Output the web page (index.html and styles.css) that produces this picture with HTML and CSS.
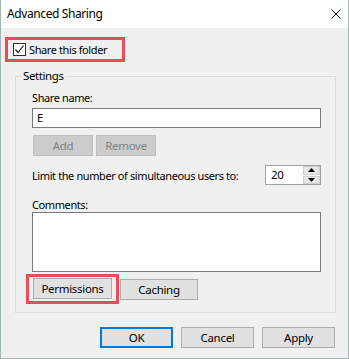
FILE: index.html
```html
<!DOCTYPE html>
<html lang="en">
<head>
  <meta charset="UTF-8" />
  <title>Advanced Sharing</title>
  <link rel="stylesheet" href="styles.css">
</head>
<body>
  <div class="window">
    <div class="titlebar">
      <span class="title">Advanced Sharing</span>
      <svg class="close" width="10" height="10" viewBox="0 0 10 10">
        <path d="M0.5 0.5 L9.5 9.5 M9.5 0.5 L0.5 9.5" stroke="#111" stroke-width="1" fill="none"/>
      </svg>
    </div>

    <div class="content">
      <div class="highlight share-row">
        <span class="checkbox">
          <svg width="11" height="11" viewBox="0 0 11 11">
            <path d="M1.5 5.5 L4 8.5 L9.5 1.5" stroke="#222" stroke-width="1.2" fill="none"/>
          </svg>
        </span>
        <span>Share this folder</span>
      </div>

      <div class="group">
        <div class="group-title">Settings</div>
        <div class="group-body">
          <div class="label">Share name:</div>
          <div class="field">E</div>

          <div class="btn-row">
            <button class="btn disabled">Add</button>
            <button class="btn disabled remove">Remove</button>
          </div>

          <div class="limit-row">
            <span class="limit-text">Limit the number of simultaneous users to:</span>
            <div class="spinner">
              <span class="spin-value">20</span>
              <div class="spin-btns">
                <span class="spin-btn">
                  <svg width="7" height="4" viewBox="0 0 7 4"><path d="M3.5 0 L7 4 L0 4 Z" fill="#000"/></svg>
                </span>
                <span class="spin-btn">
                  <svg width="7" height="4" viewBox="0 0 7 4"><path d="M0 0 L7 0 L3.5 4 Z" fill="#000"/></svg>
                </span>
              </div>
            </div>
          </div>

          <div class="label comments">Comments:</div>
          <div class="textarea"></div>

          <div class="perm-row">
            <div class="highlight perm-box">
              <button class="btn perm">Permissions</button>
            </div>
            <button class="btn caching">Caching</button>
          </div>
        </div>
      </div>

      <div class="footer">
        <button class="btn ok">OK</button>
        <button class="btn">Cancel</button>
        <button class="btn">Apply</button>
      </div>
    </div>
  </div>
</body>
</html>
```

FILE: styles.css
```css
* {
  box-sizing: border-box;
}

body {
  margin: 0;
  font-family: 'Noto Sans', 'Open Sans', sans-serif;
  font-size: 11px;
  letter-spacing: -0.4px;
  color: #000;
  background: #f0f0f0;
}

.window {
  width: 349px;
  height: 359px;
  border: 1px solid #a5b3b3;
  border-top: none;
  background: #f0f0f0;
}

.titlebar {
  height: 28px;
  background: #fff;
  display: flex;
  align-items: center;
  justify-content: space-between;
  padding: 0 7px 1px 6px;
}

.title {
  font-size: 12px;
  letter-spacing: -0.4px;
}

.close {
  display: block;
}

.highlight {
  border: 3px solid #ec4c58;
}

.share-row {
  margin: 9px 0 0 4px;
  width: 120px;
  height: 25px;
  display: flex;
  align-items: center;
  padding-left: 5px;
  gap: 3px;
  font-size: 11px;
}

.checkbox {
  width: 13px;
  height: 13px;
  border: 1px solid #333;
  background: #fff;
  display: flex;
  align-items: center;
  justify-content: center;
}

.checkbox svg {
  display: block;
}

.group {
  margin: 14px 0 0 14px;
  width: 321px;
  height: 237px;
  border: 1px solid #dcdcdc;
}

.group-title {
  width: fit-content;
  margin: -9px 0 0 6px;
  padding: 0 1px;
  line-height: 15px;
  font-size: 11.5px;
  background: #f0f0f0;
}

.group-body {
  padding: 0 14px 0 16px;
}

.label {
  line-height: 15px;
  margin-top: 7px;
}

.field {
  margin-top: 3px;
  height: 20px;
  border: 1px solid #7a7a7a;
  background: #fff;
  padding-left: 4px;
  line-height: 18px;
}

.btn-row {
  display: flex;
  gap: 3px;
  margin: 7px 0 0 1px;
}

.btn {
  font-family: inherit;
  font-size: 11.5px;
  letter-spacing: -0.3px;
  color: #000;
  height: 21px;
  width: 73px;
  padding: 0;
  background: #e1e1e1;
  border: 1px solid #adadad;
  border-radius: 0;
}

.btn.disabled {
  width: 60px;
  background: #cccccc;
  border-color: #bfbfbf;
  color: #838383;
}

.limit-row {
  margin-top: 9px;
  display: flex;
  align-items: center;
  justify-content: space-between;
}

.limit-text {
  white-space: nowrap;
}

.spinner {
  width: 56px;
  height: 20px;
  border: 1px solid #a0a0a0;
  background: #fff;
  display: flex;
}

.spin-value {
  flex: 1;
  padding-left: 5px;
  line-height: 18px;
  font-size: 11.5px;
}

.spin-btns {
  width: 17px;
  display: flex;
  flex-direction: column;
  gap: 1px;
  background: #fff;
}

.spin-btn {
  flex: 1;
  background: #e6e6e6;
  border: 1px solid #cfcfcf;
  display: flex;
  align-items: center;
  justify-content: center;
}

.spin-btn svg {
  display: block;
}

.comments {
  margin-top: 13px;
  line-height: 14px;
}

.textarea {
  height: 60px;
  border: 1px solid #7a7a7a;
  background: #fff;
}

.perm-row {
  margin: 2px 0 0 -6px;
  display: flex;
  align-items: center;
}

.perm-box {
  width: 93px;
  height: 30px;
  padding: 1px 4px 2px 4px;
}

.btn.perm {
  width: 79px;
}

.btn.caching {
  width: 78px;
  margin-left: 1px;
}

.footer {
  margin-top: 14px;
  display: flex;
  justify-content: flex-end;
  gap: 8px;
  padding-right: 13px;
}

.btn.ok {
  border: 2px solid #0078d7;
}
```
